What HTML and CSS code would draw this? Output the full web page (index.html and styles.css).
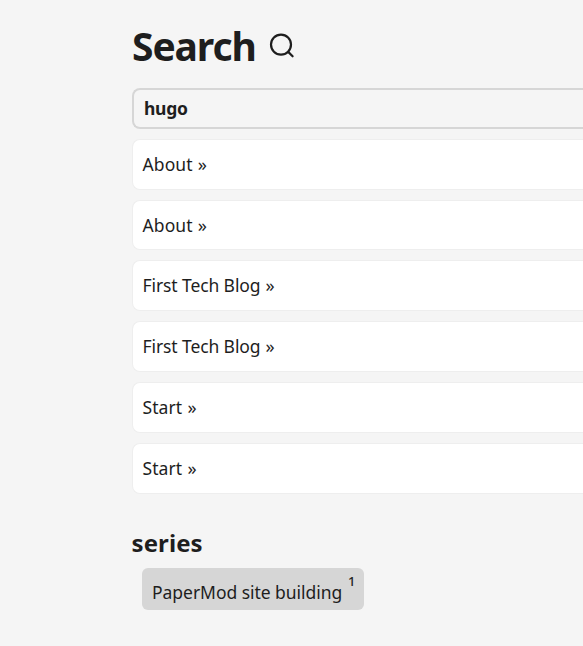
FILE: index.html
```html
<!DOCTYPE html>
<html lang="en">
<head>
<meta charset="utf-8">
<title>Search</title>
<link rel="stylesheet" href="styles.css">
</head>
<body>
<main class="main">
  <header class="page-header">
    <h1>Search</h1>
    <svg class="search-icon" viewBox="0 0 28 28" fill="none" stroke="currentColor" stroke-width="2.2" stroke-linecap="round" stroke-linejoin="round"><circle cx="12" cy="12.6" r="10"/><path d="M23.6 24.3L19.2 19.9"/></svg>
  </header>
  <div class="search-box">hugo</div>
  <ul class="results">
    <li>About <span class="arrow">»</span></li>
    <li>About <span class="arrow">»</span></li>
    <li class="blog">First Tech Blog <span class="arrow">»</span></li>
    <li class="blog">First Tech Blog <span class="arrow">»</span></li>
    <li>Start <span class="arrow">»</span></li>
    <li>Start <span class="arrow">»</span></li>
  </ul>
  <h2>series</h2>
  <div class="term"><span class="term-name">PaperMod site building</span><sup>1</sup></div>
</main>
</body>
</html>
```

FILE: styles.css
```css
* { box-sizing: border-box; margin: 0; padding: 0; }
body {
  background: #f5f5f5;
  color: #1e1e1e;
  font: 18px/28px "Noto Sans", "Open Sans", sans-serif;
}
.main { padding: 20px 0 0 132px; }
.page-header { display: flex; align-items: center; height: 52px; }
h1 { width: 124px; font-size: 39px; line-height: 50px; font-weight: 700; letter-spacing: -1.1px; white-space: nowrap; }
.search-icon { width: 28px; height: 28px; margin-left: 13px; }
.search-box {
  height: 41px;
  margin-top: 16px;
  padding: 4px 10px;
  border: 2px solid #d6d6d6;
  border-right: 0;
  border-radius: 8px 0 0 8px;
  font-size: 17.5px;
  font-weight: 700;
  letter-spacing: -0.3px;
}
.results { list-style: none; margin-top: 9.8px; }
.results li {
  height: 50.8px;
  margin-bottom: 10px;
  padding: 10px 9.5px;
  background: #fff;
  border: 1px solid #eee;
  border-right: 0;
  border-radius: 8px 0 0 8px;
  font-size: 17.5px;
  letter-spacing: 0.1px;
}
.results .blog { letter-spacing: -0.1px; }
.arrow { margin-left: 0.5px; font-size: 18px; }
h2 { margin: 32px 0 0 -0.5px; font-size: 24px; line-height: 34px; letter-spacing: 0.1px; }
.term {
  display: flex;
  width: 222px;
  height: 42px;
  margin: 8px 0 0 10px;
  padding: 10px;
  background: #d6d6d6;
  border-radius: 6px;
  white-space: nowrap;
}
.term-name { width: 190px; font-size: 17.5px; letter-spacing: -0.04px; }
sup { font-size: 13px; line-height: 16px; margin: -5px 0 0 6px; font-weight: 500; }
```
